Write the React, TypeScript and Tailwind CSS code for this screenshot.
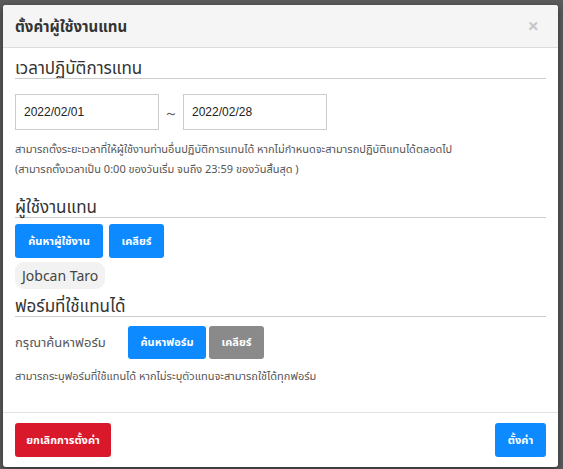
import React from "react";

const FONT = { fontFamily: '"Noto Sans", "Noto Sans Thai", Tahoma, sans-serif' };

function SectionTitle({ children, className = "" }: { children: React.ReactNode; className?: string }) {
  return (
    <div className={`border-b border-[#cccccc] text-[17px] leading-[21px] text-[#333333] ${className}`}>
      {children}
    </div>
  );
}

function Btn({
  children,
  color = "blue",
  className = "",
}: {
  children: React.ReactNode;
  color?: "blue" | "gray" | "red";
  className?: string;
}) {
  const bg =
    color === "blue" ? "bg-[#0d8aff]" : color === "gray" ? "bg-[#8a8a8a]" : "bg-[#d9182b]";
  return (
    <button
      type="button"
      className={`${bg} flex items-center justify-center rounded-[3px] text-[11px] font-bold text-white ${className}`}
    >
      {children}
    </button>
  );
}

export default function App() {
  return (
    <div className="h-[469px] w-[563px] overflow-hidden bg-[#5b5b5b] pl-[3px] pt-[5px]" style={FONT}>
      <div className="flex h-[462px] w-[555px] flex-col overflow-hidden rounded-[3px] bg-white shadow-[0_2px_6px_rgba(0,0,0,0.5)]">
        {/* header */}
        <div className="flex h-[43px] shrink-0 items-center justify-between border-b border-[#dddddd] bg-[#f5f5f5] pl-[12px] pr-[19px]">
          <p className="text-[15px] font-bold text-[#333333]">ตั้งค่าผู้ใช้งานแทน</p>
          <span className="text-[20px] font-bold leading-none text-[#c8c8c8]">×</span>
        </div>

        {/* body */}
        <div className="flex-1 px-[12px]">
          <SectionTitle className="mt-[9px]">เวลาปฏิบัติการแทน</SectionTitle>

          <div className="mt-[15px] flex items-center">
            <div
              className="flex h-[36px] w-[144px] items-center border border-[#cccccc] px-[8px] text-[12px] text-[#222222]"
              style={{ fontFamily: '"Liberation Sans", Arial, sans-serif' }}
            >
              2022/02/01
            </div>
            <span className="w-[24px] text-center text-[14px] text-[#555555]">～</span>
            <div
              className="flex h-[36px] w-[144px] items-center border border-[#cccccc] px-[8px] text-[12px] text-[#222222]"
              style={{ fontFamily: '"Liberation Sans", Arial, sans-serif' }}
            >
              2022/02/28
            </div>
          </div>

          <div className="mt-[9px] text-[11px] leading-[20px] text-[#555555]">
            <p>สามารถตั้งระยะเวลาที่ให้ผู้ใช้งานท่านอื่นปฏิบัติการแทนได้ หากไม่กำหนดจะสามารถปฏิบัติแทนได้ตลอดไป</p>
            <p>(สามารถตั้งเวลาเป็น 0:00 ของวันเริ่ม จนถึง 23:59 ของวันสิ้นสุด )</p>
          </div>

          <SectionTitle className="mt-[17px]">ผู้ใช้งานแทน</SectionTitle>

          <div className="mt-[6px] flex gap-[6px]">
            <Btn className="h-[34px] w-[88px]">ค้นหาผู้ใช้งาน</Btn>
            <Btn className="h-[34px] w-[55px]">เคลียร์</Btn>
          </div>

          <div className="mt-[4px] inline-flex h-[27px] items-center rounded-[9px] bg-[#f2f2f2] px-[7px] text-[14px] text-[#444444]">
            Jobcan Taro
          </div>

          <SectionTitle className="mt-[6px]">ฟอร์มที่ใช้แทนได้</SectionTitle>

          <div className="mt-[9px] flex items-center">
            <span className="w-[113px] text-[13px] text-[#555555]">กรุณาค้นหาฟอร์ม</span>
            <Btn className="h-[33px] w-[78px]">ค้นหาฟอร์ม</Btn>
            <Btn color="gray" className="ml-[3px] h-[33px] w-[55px]">เคลียร์</Btn>
          </div>

          <p className="mt-[7px] text-[11px] leading-[20px] text-[#555555]">
            สามารถระบุฟอร์มที่ใช้แทนได้ หากไม่ระบุตัวแทนจะสามารถใช้ได้ทุกฟอร์ม
          </p>
        </div>

        {/* footer */}
        <div className="flex h-[55px] shrink-0 items-center justify-between border-t border-[#e2e2e2] px-[12px]">
          <Btn color="red" className="h-[34px] w-[96px]">ยกเลิกการตั้งค่า</Btn>
          <Btn className="h-[34px] w-[51px]">ตั้งค่า</Btn>
        </div>
      </div>
    </div>
  );
}
